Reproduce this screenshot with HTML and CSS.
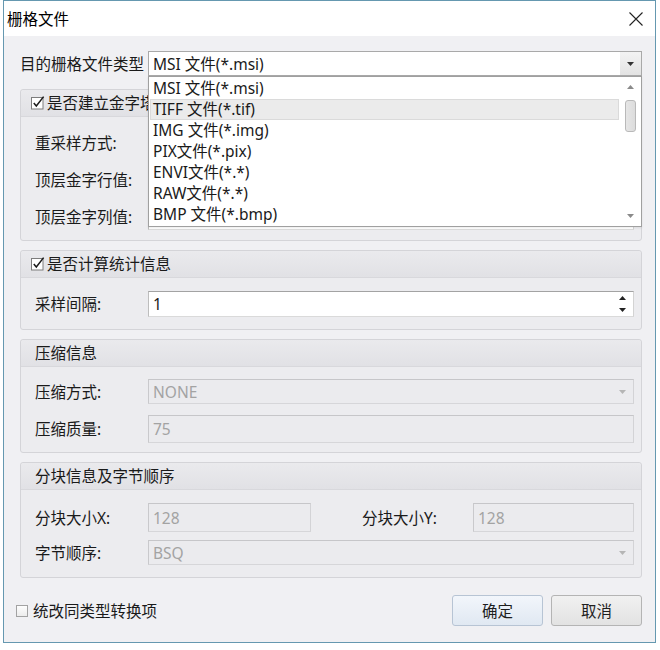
FILE: index.html
```html
<!DOCTYPE html>
<html lang="zh-CN">
<head>
  <meta charset="UTF-8" />
  <title>栅格文件</title>
  <link rel="stylesheet" href="styles.css">
</head>
<body>
  <div class="dialog">
    <div class="titlebar">
      <span class="title">栅格文件</span>
      <svg class="close" width="14" height="14" viewBox="0 0 14 14">
        <path d="M0.5 0.5 L13.5 13.5 M13.5 0.5 L0.5 13.5" stroke="#222" stroke-width="1.1" fill="none" />
      </svg>
    </div>

    <div class="content">
      <div class="type-row">
        <span class="type-label">目的栅格文件类型</span>
        <div class="main-combo">
          <span class="combo-text">MSI 文件(*.msi)</span>
          <span class="combo-btn">
            <svg width="7" height="4" viewBox="0 0 7 4"><path d="M0 0 L7 0 L3.5 4 Z" fill="#333" /></svg>
          </span>

          <div class="droplist">
            <ul class="items">
              <li>MSI 文件(*.msi)</li>
              <li class="hover">TIFF 文件(*.tif)</li>
              <li>IMG 文件(*.img)</li>
              <li>PIX文件(*.pix)</li>
              <li>ENVI文件(*.*)</li>
              <li>RAW文件(*.*)</li>
              <li>BMP 文件(*.bmp)</li>
            </ul>
            <div class="scrollbar">
              <span class="sb-arrow">
                <svg width="7" height="4" viewBox="0 0 7 4"><path d="M0 4 L7 4 L3.5 0 Z" fill="#8a8a8a" /></svg>
              </span>
              <span class="sb-thumb"></span>
              <span class="sb-space"></span>
              <span class="sb-arrow">
                <svg width="7" height="4" viewBox="0 0 7 4"><path d="M0 0 L7 0 L3.5 4 Z" fill="#8a8a8a" /></svg>
              </span>
            </div>
          </div>
        </div>
      </div>

      <div class="group first">
        <div class="group-head has-check">
          <svg class="check" width="15" height="15" viewBox="0 0 15 15">
            <rect x="0.5" y="2.5" width="11.5" height="11.5" fill="#fff" stroke="#7d7d7d" />
            <path d="M2.8 8 L5.3 11 L12.6 1.6" stroke="#1a1a1a" stroke-width="1.5" fill="none" />
          </svg>
          <span>是否建立金字塔</span>
        </div>
        <div class="group-body pyramid">
          <div class="row">
            <span class="lbl">重采样方式:</span>
            <div class="field"></div>
          </div>
          <div class="row">
            <span class="lbl">顶层金字行值:</span>
            <div class="field"></div>
          </div>
          <div class="row">
            <span class="lbl">顶层金字列值:</span>
            <div class="field"></div>
          </div>
        </div>
      </div>

      <div class="group">
        <div class="group-head has-check">
          <svg class="check" width="15" height="15" viewBox="0 0 15 15">
            <rect x="0.5" y="2.5" width="11.5" height="11.5" fill="#fff" stroke="#7d7d7d" />
            <path d="M2.8 8 L5.3 11 L12.6 1.6" stroke="#1a1a1a" stroke-width="1.5" fill="none" />
          </svg>
          <span>是否计算统计信息</span>
        </div>
        <div class="group-body stats">
          <div class="row">
            <span class="lbl">采样间隔:</span>
            <div class="field">
              <span class="field-text">1</span>
              <span class="spin">
                <svg width="7" height="4" viewBox="0 0 7 4"><path d="M0 4 L7 4 L3.5 0 Z" fill="#222" /></svg>
                <svg width="7" height="4" viewBox="0 0 7 4"><path d="M0 0 L7 0 L3.5 4 Z" fill="#222" /></svg>
              </span>
            </div>
          </div>
        </div>
      </div>

      <div class="group">
        <div class="group-head">压缩信息</div>
        <div class="group-body compress">
          <div class="row">
            <span class="lbl">压缩方式:</span>
            <div class="field disabled combo">
              <span class="field-text">NONE</span>
              <svg class="combo-arrow" width="7" height="4" viewBox="0 0 7 4"><path d="M0 0 L7 0 L3.5 4 Z" fill="#b5b5b5" /></svg>
            </div>
          </div>
          <div class="row">
            <span class="lbl">压缩质量:</span>
            <div class="field disabled tall">75</div>
          </div>
        </div>
      </div>

      <div class="group">
        <div class="group-head">分块信息及字节顺序</div>
        <div class="group-body block">
          <div class="row">
            <span class="lbl">分块大小X:</span>
            <div class="field disabled taller short">128</div>
            <span class="lbl lbl-y">分块大小Y:</span>
            <div class="field disabled taller">128</div>
          </div>
          <div class="row">
            <span class="lbl">字节顺序:</span>
            <div class="field disabled combo">
              <span class="field-text">BSQ</span>
              <svg class="combo-arrow" width="7" height="4" viewBox="0 0 7 4"><path d="M0 0 L7 0 L3.5 4 Z" fill="#b5b5b5" /></svg>
            </div>
          </div>
        </div>
      </div>

      <div class="footer">
        <label class="apply-all">
          <span class="box"></span>
          <span>统改同类型转换项</span>
        </label>
        <div class="buttons">
          <button class="btn primary">确定</button>
          <button class="btn">取消</button>
        </div>
      </div>
    </div>
  </div>
</body>
</html>
```

FILE: styles.css
```css
* {
  margin: 0;
  padding: 0;
  box-sizing: border-box;
}

body {
  font-family: "Noto Sans", "Noto Sans CJK SC", sans-serif;
  font-size: 15.5px;
  line-height: 20px;
  color: #1a1a1a;
  background: #fff;
}

.dialog {
  margin-left: 3px;
  width: 653px;
  height: 643px;
  border: 1px solid #6598b0;
  background: #f0f0f3;
  display: flex;
  flex-direction: column;
}

.titlebar {
  height: 35px;
  flex-shrink: 0;
  background: #fff;
  display: flex;
  align-items: center;
  justify-content: space-between;
  padding: 0 12px 0 3px;
}

.title {
  color: #000;
}

.content {
  flex: 1;
  padding: 15px 13px 0 16px;
  display: flex;
  flex-direction: column;
}

/* target type row + open dropdown */
.type-row {
  display: flex;
  align-items: center;
  height: 25px;
}

.type-label {
  width: 128px;
  flex-shrink: 0;
}

.main-combo {
  flex: 1;
  height: 25px;
  position: relative;
  display: flex;
  align-items: center;
  background: #fff;
  border: 1px solid #a9a9a9;
}

.combo-text {
  padding-left: 4px;
}

.combo-btn {
  margin-left: auto;
  width: 21px;
  height: 100%;
  display: flex;
  align-items: center;
  justify-content: center;
  background: linear-gradient(#f3f3f3, #e3e3e3);
}

.droplist {
  position: absolute;
  top: 24px;
  left: -1px;
  width: calc(100% + 2px);
  height: 151px;
  z-index: 10;
  display: flex;
  background: #fff;
  border: 1px solid #a0a0a0;
  box-shadow: 0 1px 2px rgba(0, 0, 0, 0.08);
}

.items {
  flex: 1;
  list-style: none;
  padding-top: 1px;
}

.items li {
  height: 21px;
  line-height: 21px;
  padding-left: 4px;
  color: #1a1a1a;
}

.items li.hover {
  margin-left: 1px;
  padding-left: 2px;
  line-height: 19px;
  background: #ebebeb;
  border: 1px solid #dadada;
}

.scrollbar {
  width: 22px;
  display: flex;
  flex-direction: column;
  align-items: center;
  background: #fff;
}

.sb-arrow {
  height: 20px;
  display: flex;
  align-items: center;
  justify-content: center;
}

.sb-thumb {
  margin-top: 3px;
  width: 11px;
  height: 32px;
  border-radius: 3px;
  background: linear-gradient(90deg, #e6e6e6, #dcdcdc);
  border: 1px solid #b9b9b9;
}

.sb-space {
  flex: 1;
}

/* group boxes */
.group {
  margin-top: 9px;
  border: 1px solid #d4d4d8;
  border-radius: 3px;
  background: #ececef;
}

.group.first {
  margin-top: 13px;
}

.group-head {
  height: 27px;
  display: flex;
  align-items: center;
  padding-left: 14px;
  background: linear-gradient(#eaeaed, #e1e1e5);
  border-bottom: 1px solid #d8d8dc;
  border-radius: 3px 3px 0 0;
}

.group-head.has-check {
  padding-left: 10px;
  gap: 1px;
}

.check {
  margin-top: -2px;
}

.group-body {
  display: flex;
  flex-direction: column;
  padding: 13px 7px 10px 14px;
  gap: 11px;
}

.group-body.stats {
  padding-bottom: 12px;
}

.group-body.compress {
  padding-top: 12px;
  padding-bottom: 9px;
}

.group-body.block {
  gap: 8px;
  padding-bottom: 12px;
}

.row {
  display: flex;
  align-items: center;
}

.lbl {
  width: 113px;
  flex-shrink: 0;
}

.lbl-y {
  width: 111px;
  margin-left: 51px;
}

.field {
  flex: 1;
  height: 26px;
  display: flex;
  align-items: center;
  padding-left: 4px;
  background: #fff;
  border: 1px solid;
  border-color: #a3a3a3 #d3d3d3 #dadada #bdbdbd;
}

.field.combo {
  height: 25px;
}

.field.tall {
  height: 28px;
}

.field.taller {
  height: 29px;
}

.field.short {
  flex: 0 0 163px;
}

.field.disabled {
  background: #ebebee;
  border-color: #c6c6c9 #d3d3d6 #d6d6d9 #c9c9cc;
  color: #a3a3a3;
}

.spin,
.combo-arrow {
  margin-left: auto;
  margin-right: 7px;
}

.spin {
  display: flex;
  flex-direction: column;
  gap: 8px;
}

/* footer */
.footer {
  margin-top: 17px;
  display: flex;
  align-items: center;
}

.apply-all {
  margin-left: -4px;
  display: flex;
  align-items: center;
  gap: 5px;
}

.box {
  width: 12px;
  height: 12px;
  border: 1px solid #a2a2a2;
  background: linear-gradient(#fdfdfd, #ececec);
}

.buttons {
  margin-left: auto;
  display: flex;
  gap: 8px;
}

.btn {
  width: 91px;
  height: 31px;
  font: inherit;
  color: #1e1e1e;
  border: 1px solid #b4b4b4;
  border-radius: 3px;
  background: linear-gradient(#f1f1f1, #e2e2e2);
}

.btn.primary {
  border-color: #b7c4d4;
  background: linear-gradient(#f2f6fb, #e0e8f2);
}
```
